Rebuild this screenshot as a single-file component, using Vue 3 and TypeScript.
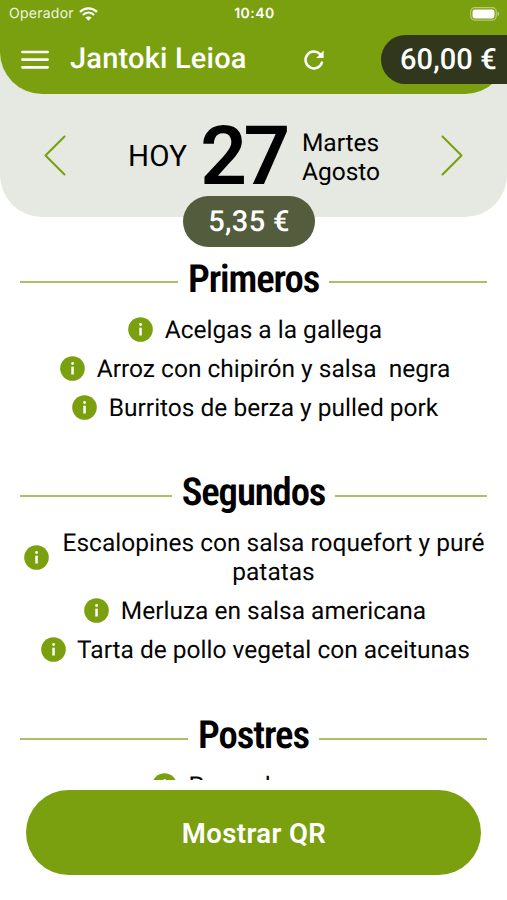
<script setup lang="ts">
interface Section {
  title: string
  items: string[]
}

const sections: Section[] = [
  {
    title: 'Primeros',
    items: ['Acelgas a la gallega', 'Arroz con chipirón y salsa\u00a0 negra', 'Burritos de berza y pulled pork'],
  },
  {
    title: 'Segundos',
    items: [
      'Escalopines con salsa roquefort y puré patatas',
      'Merluza en salsa americana',
      'Tarta de pollo vegetal con aceitunas',
    ],
  },
  { title: 'Postres', items: ['Peras de crema'] },
]
</script>

<template>
  <div class="screen">
    <header class="header">
      <div class="status">
        <div class="carrier">
          <span>Operador</span>
          <svg class="wifi" width="19" height="14" viewBox="0 0 19 14" fill="none" stroke="#fff" stroke-width="2.3">
            <path d="M1 4.9C6 .2 13 .2 18 4.9M3.9 8C7.2 4.9 11.8 4.9 15.1 8" />
            <path d="M9.5 13.7 6.4 10.6C8.1 9 10.9 9 12.6 10.6Z" fill="#fff" stroke="none" />
          </svg>
        </div>
        <span class="clock">10:40</span>
        <svg class="battery" width="30" height="14" viewBox="0 0 30 14">
          <rect x=".7" y=".7" width="25.6" height="12.4" rx="4" fill="none" stroke="#fff" stroke-opacity=".45" stroke-width="1.2" />
          <rect x="2.5" y="2.4" width="22" height="9" rx="2.3" fill="#fff" />
          <path d="M27.6 4.6c2 .8 2 3.8 0 4.6z" fill="#fff" fill-opacity=".5" />
        </svg>
      </div>
      <div class="toolbar">
        <svg class="menu" width="28" height="20" viewBox="0 0 28 20" stroke="#fff" stroke-width="2.7" stroke-linecap="round">
          <path d="M1.4 2H26.6M1.4 9.6H26.6M1.4 17.3H26.6" />
        </svg>
        <h1>Jantoki Leioa</h1>
        <svg class="refresh" width="22" height="22" viewBox="0 0 22 22" fill="none" stroke="#fff" stroke-width="2.5">
          <path d="M18.9 13.6A8.4 8.4 0 1 1 17 5.2" stroke-linecap="round" />
          <path d="M20.6 1.6V8.9H13.1Z" fill="#fff" stroke="none" />
        </svg>
        <div class="balance">60,00 €</div>
      </div>
    </header>

    <section class="day">
      <svg class="arrow" width="22" height="41" viewBox="0 0 22 41" fill="none" stroke="#7aa00f" stroke-width="2.1" stroke-linecap="round" stroke-linejoin="round">
        <path d="M20.5 1.5 1.5 20.5 20.5 39.5" />
      </svg>
      <div class="date">
        <span class="today">HOY</span>
        <span class="number">27</span>
        <div class="names"><span>Martes</span><span>Agosto</span></div>
      </div>
      <svg class="arrow" width="22" height="41" viewBox="0 0 22 41" fill="none" stroke="#7aa00f" stroke-width="2.1" stroke-linecap="round" stroke-linejoin="round">
        <path d="M1.5 1.5 20.5 20.5 1.5 39.5" />
      </svg>
      <div class="price">5,35 €</div>
    </section>

    <main class="menu-list">
      <section v-for="s in sections" :key="s.title" class="course">
        <h2><span>{{ s.title }}</span></h2>
        <ul>
          <li v-for="item in s.items" :key="item">
            <svg class="info" width="25" height="25" viewBox="0 0 25 25">
              <circle cx="12.5" cy="12.5" r="12.3" fill="#7aa00f" />
              <circle cx="12.6" cy="7.5" r="1.4" fill="#fff" />
              <path d="M11.3 10.7h2.5v7.8h-2.5z" fill="#fff" />
            </svg>
            <span class="dish">{{ item }}</span>
          </li>
        </ul>
      </section>
    </main>

    <footer><button type="button">Mostrar QR</button></footer>
  </div>
</template>

<style>
body { margin: 0; background: #fff; }
</style>

<style scoped>
* { box-sizing: border-box; }
.screen {
  width: 507px;
  height: 900px;
  overflow: hidden;
  display: flex;
  flex-direction: column;
  background: linear-gradient(#e5e9e1 94px, #fff 94px);
  color: #050505;
  font-family: Roboto, sans-serif;
  text-rendering: geometricPrecision;
}
.header {
  position: relative;
  z-index: 1;
  flex: none;
  height: 94px;
  background: #7aa00f;
  color: #fff;
  border-radius: 0 0 42px 42px;
}
.status {
  display: grid;
  grid-template-columns: 1fr auto 1fr;
  align-items: center;
  height: 27px;
  padding: 0 7px 0 9px;
}
.carrier { display: flex; align-items: center; gap: 5px; font: 400 14px Inter, sans-serif; letter-spacing: .25px; color: #f0f5e2; }
.clock { font: 600 14px Inter, sans-serif; letter-spacing: .5px; }
.battery { justify-self: end; }
.toolbar { display: flex; align-items: center; height: 65px; padding-left: 21px; }
h1 { margin: 0 0 0 21px; width: 178px; font-size: 29px; font-weight: 500; letter-spacing: .2px; line-height: 41px; white-space: nowrap; }
.refresh { margin-left: 55px; }
.balance {
  margin-left: auto;
  width: 126px;
  height: 49px;
  padding-left: 19px;
  border-radius: 25px 0 0 25px;
  background: #30371c;
  font-size: 29px;
  font-weight: 500;
  line-height: 50px;
  letter-spacing: .1px;
  white-space: nowrap;
}
.day {
  position: relative;
  flex: none;
  display: flex;
  align-items: center;
  justify-content: space-between;
  height: 165px;
  margin-top: -42px;
  padding: 42px 44px 0;
  border-radius: 0 0 42px 42px;
  background: #e5e9e1;
}
.date { display: flex; align-items: center; padding: 2px 0 0 1px; color: #000; }
.today { font-size: 29.5px; letter-spacing: .3px; }
.number { margin-left: 13px; font-size: 82px; font-weight: 600; line-height: 80px; letter-spacing: -3.5px; }
.names { display: flex; flex-direction: column; margin-left: 15px; font-size: 24.5px; line-height: 29px; }
.arrow { flex: none; }
.price {
  position: absolute;
  left: 183px;
  bottom: -30px;
  width: 132px;
  height: 51px;
  border-radius: 26px;
  background: #535c3c;
  color: #fff;
  text-align: center;
  font-size: 29px;
  font-weight: 500;
  line-height: 52px;
  letter-spacing: .3px;
}
.menu-list { flex: none; height: 563px; overflow: hidden; padding: 38px 20px 0; }
.course { margin-bottom: 42.2px; }
h2 { display: flex; align-items: center; gap: 10px; margin: 0; height: 54px; font-size: 38.7px; font-weight: 600; color: #000; }
h2::before, h2::after { content: ""; flex: 1; height: 2px; background: #a9c063; }
h2 span { padding-bottom: 6px; font-family: "Roboto Condensed", Roboto, sans-serif; font-stretch: 75%; letter-spacing: -1.1px; }
ul { list-style: none; margin: 0; padding: .6px 0 0 3.5px; }
li { display: flex; align-items: center; justify-content: center; min-height: 39px; padding: 5px 0; gap: 11.5px; }
.info { flex: none; }
.dish { font-size: 24.5px; line-height: 29px; text-align: center; }
footer { padding: 10px 26px 0; }
button { display: block; width: 455px; height: 85px; padding: 2px 0 0 1px; border: 0; border-radius: 43px; background: #7aa00f; color: #fff; font: 600 27.5px Roboto, sans-serif; letter-spacing: .4px; }
</style>
